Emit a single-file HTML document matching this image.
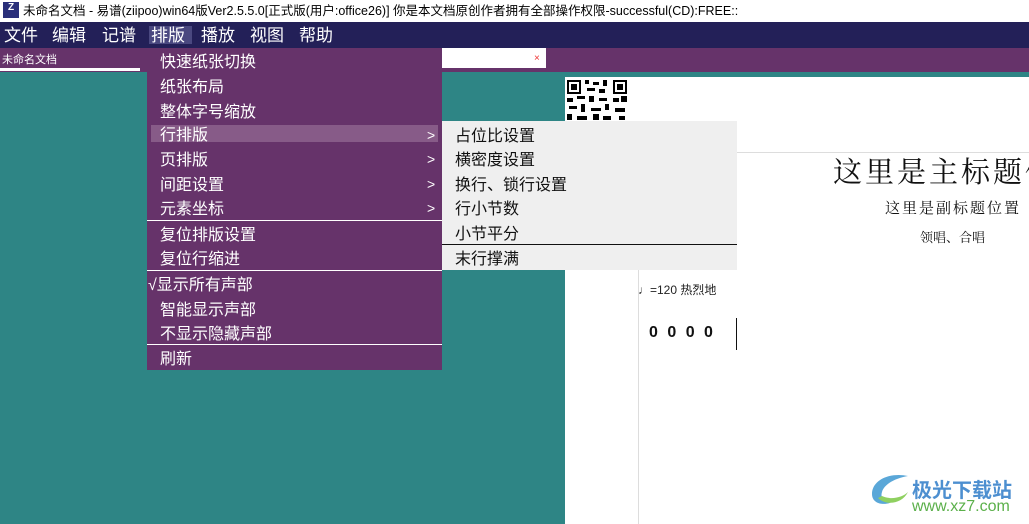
<!DOCTYPE html>
<html><head><meta charset="utf-8"><style>
*{margin:0;padding:0;box-sizing:border-box}
body{width:1029px;height:524px;overflow:hidden;position:relative;background:#2e8585;font-family:"Liberation Sans","Noto Sans CJK SC",sans-serif}
.a{position:absolute;white-space:nowrap}
.mb{position:absolute;top:25px;font-size:17px;line-height:22px;color:#fff}
.mi{position:absolute;left:160px;color:#fff;font-size:16px;line-height:20px}
.ar{position:absolute;left:427px;color:#fff;font-size:14px;line-height:20px}
.si{position:absolute;left:455px;color:#111;font-size:16px;line-height:20px}
</style></head><body>
<div class="a" style="left:0;top:0;width:1029px;height:22px;background:#fff"></div>
<div class="a" style="left:3px;top:2px;width:16px;height:16px;background:#2a2f7a;color:#fff;font-size:10px;font-weight:bold;text-align:center;line-height:12px">Z</div>
<div class="a" style="left:23px;top:3px;font-size:12.5px;line-height:16px;color:#000">未命名文档 - 易谱(ziipoo)win64版Ver2.5.5.0[正式版(用户:office26)] 你是本文档原创作者拥有全部操作权限-successful(CD):FREE::</div>
<div class="a" style="left:0;top:22px;width:1029px;height:26px;background:#232058"></div>
<div class="a" style="left:149px;top:26px;width:43px;height:18px;background:#4a4880"></div>
<div class="mb" style="left:4px">文件</div>
<div class="mb" style="left:52px">编辑</div>
<div class="mb" style="left:102px">记谱</div>
<div class="mb" style="left:151px">排版</div>
<div class="mb" style="left:201px">播放</div>
<div class="mb" style="left:250px">视图</div>
<div class="mb" style="left:299px">帮助</div>
<div class="a" style="left:0;top:48px;width:1029px;height:24px;background:#66336a"></div>
<div class="a" style="left:2px;top:51px;font-size:11px;color:#fff">未命名文档</div>
<div class="a" style="left:0;top:68px;width:140px;height:3px;background:#fff"></div>
<div class="a" style="left:413px;top:48px;width:133px;height:20px;background:#fff"></div>
<div class="a" style="left:534px;top:53px;font-size:10px;color:#e33">×</div>
<div class="a" style="left:565px;top:77px;width:464px;height:447px;background:#fff"></div>
<svg class="a" style="left:567px;top:80px" width="62" height="42" viewBox="0 0 62 42">
<rect x="0" y="0" width="14" height="14" fill="#000"/><rect x="2" y="2" width="10" height="10" fill="#fff"/><rect x="4" y="4" width="6" height="6" fill="#000"/>
<rect x="46" y="0" width="14" height="14" fill="#000"/><rect x="48" y="2" width="10" height="10" fill="#fff"/><rect x="50" y="4" width="6" height="6" fill="#000"/>
<g fill="#000"><rect x="18" y="0" width="4" height="4"/><rect x="26" y="2" width="6" height="3"/><rect x="36" y="0" width="4" height="6"/><rect x="20" y="8" width="8" height="3"/><rect x="32" y="9" width="6" height="4"/>
<rect x="0" y="18" width="6" height="4"/><rect x="10" y="16" width="8" height="3"/><rect x="22" y="16" width="5" height="6"/><rect x="32" y="18" width="8" height="3"/><rect x="46" y="18" width="6" height="4"/><rect x="54" y="16" width="6" height="6"/>
<rect x="2" y="26" width="8" height="3"/><rect x="14" y="24" width="4" height="8"/><rect x="24" y="28" width="10" height="3"/><rect x="38" y="24" width="4" height="6"/><rect x="48" y="28" width="10" height="4"/>
<rect x="0" y="34" width="5" height="6"/><rect x="10" y="36" width="10" height="4"/><rect x="26" y="34" width="6" height="6"/><rect x="36" y="36" width="8" height="4"/><rect x="52" y="36" width="6" height="4"/></g></svg>
<div class="a" style="left:737px;top:152px;width:292px;height:1px;background:#ddd"></div>
<div class="a" style="left:638px;top:270px;width:1px;height:254px;background:#ddd"></div>
<div class="a" style="left:833px;top:150px;font-family:'Noto Serif CJK SC',serif;font-size:29px;color:#111;letter-spacing:3px">这里是主标题位</div>
<div class="a" style="left:885px;top:197px;font-family:'Noto Serif CJK SC',serif;font-size:15px;color:#111;letter-spacing:2px">这里是副标题位置</div>
<div class="a" style="left:920px;top:227px;font-family:'Noto Serif CJK SC',serif;font-size:13px;color:#111">领唱、合唱</div>
<div class="a" style="left:638px;top:281px;font-size:12px;color:#222">♩=120 热烈地</div>
<div class="a" style="left:649px;top:324px;font-size:16px;font-weight:bold;color:#111;word-spacing:5px">0 0 0 0</div>
<div class="a" style="left:736px;top:318px;width:1px;height:32px;background:#111"></div>
<svg class="a" style="left:868px;top:472px" width="44" height="36" viewBox="0 0 44 36"><path d="M40 4C22 0 4 8 4 22c0 10 12 12 20 8-8 0-12-4-10-10 2-8 14-14 26-16z" fill="#5aa7d8"/><path d="M10 26c8 8 24 6 30-6-6 6-18 8-26 4z" fill="#8fd060"/></svg>
<div class="a" style="left:912px;top:474px;font-size:20px;font-weight:bold;color:#4d8fd0">极光下载站</div>
<div class="a" style="left:912px;top:498px;font-size:16px;color:#5bb04a">www.xz7.com</div>
<div class="a" style="left:147px;top:48px;width:295px;height:322px;background:#66336a"></div>
<div class="a" style="left:151px;top:125px;width:287px;height:17px;background:#875b88"></div>
<div class="a" style="left:147px;top:220px;width:295px;height:1px;background:#fff"></div>
<div class="a" style="left:147px;top:270px;width:295px;height:1px;background:#fff"></div>
<div class="a" style="left:147px;top:344px;width:295px;height:1px;background:#fff"></div>
<div class="mi" style="top:53px">快速纸张切换</div>
<div class="mi" style="top:78px">纸张布局</div>
<div class="mi" style="top:103px">整体字号缩放</div>
<div class="mi" style="top:126px">行排版</div><div class="ar" style="top:125px">&gt;</div>
<div class="mi" style="top:151px">页排版</div><div class="ar" style="top:149px">&gt;</div>
<div class="mi" style="top:176px">间距设置</div><div class="ar" style="top:174px">&gt;</div>
<div class="mi" style="top:200px">元素坐标</div><div class="ar" style="top:198px">&gt;</div>
<div class="mi" style="top:226px">复位排版设置</div>
<div class="mi" style="top:250px">复位行缩进</div>
<div class="mi" style="top:276px;left:148px">√显示所有声部</div>
<div class="mi" style="top:301px">智能显示声部</div>
<div class="mi" style="top:325px">不显示隐藏声部</div>
<div class="mi" style="top:350px">刷新</div>
<div class="a" style="left:442px;top:121px;width:295px;height:149px;background:#efefef"></div>
<div class="a" style="left:442px;top:244px;width:295px;height:1px;background:#111"></div>
<div class="si" style="top:127px">占位比设置</div>
<div class="si" style="top:151px">横密度设置</div>
<div class="si" style="top:176px">换行、锁行设置</div>
<div class="si" style="top:200px">行小节数</div>
<div class="si" style="top:225px">小节平分</div>
<div class="si" style="top:250px">末行撑满</div>
</body></html>
